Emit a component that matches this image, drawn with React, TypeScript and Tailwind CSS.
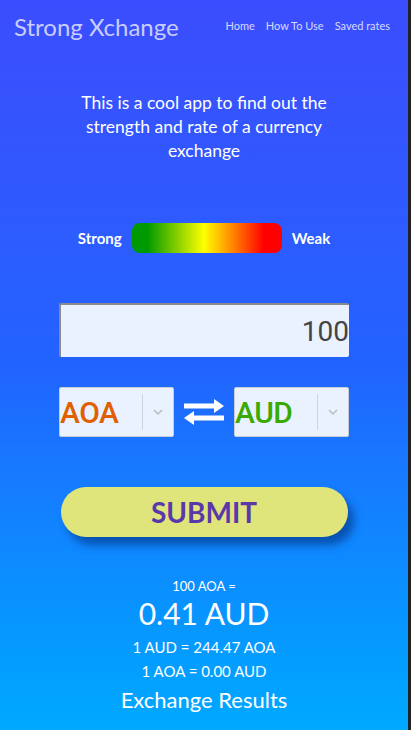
import { useState } from 'react';

export default function App() {
  const [amount, setAmount] = useState('100');
  const [from, setFrom] = useState('AOA');
  const [to, setTo] = useState('AUD');

  const navItems = ['Home', 'How To Use', 'Saved rates'];

  return (
    <div className="flex h-[730px] w-[411px] overflow-hidden bg-[#222]">
      <div
        className="flex h-full w-[408px] flex-col bg-gradient-to-b from-[#3b4dfe] via-[#2163ff] to-[#00a9ff] text-white"
        style={{ fontFamily: 'Lato, "Noto Sans", sans-serif' }}
      >
        {/* Header */}
        <header className="flex h-[53px] items-center justify-between pl-[14px] pr-[18px]">
          <a href="#" className="text-[24px] text-[#c9cdff]">Strong Xchange</a>
          <nav className="flex gap-[11px] text-[11px] text-[#d6d9ff]">
            {navItems.map((item) => (
              <a key={item} href="#">{item}</a>
            ))}
          </nav>
        </header>

        {/* Intro */}
        <p className="mx-auto mt-[38px] w-[300px] text-center text-[17.5px] leading-[24px]">
          This is a cool app to find out the strength and rate of a currency exchange
        </p>

        {/* Strength scale */}
        <div className="mt-[60px] flex items-center justify-center gap-[10px]">
          <span className="text-[15px] font-bold">Strong</span>
          <div className="h-[30px] w-[150px] rounded-[8px] bg-[linear-gradient(to_right,#009900_10%,#ffff00_48%,#ff0000_88%)]" />
          <span className="text-[15px] font-bold">Weak</span>
        </div>

        {/* Amount */}
        <input
          value={amount}
          onChange={(e) => setAmount(e.target.value)}
          className="mx-auto mt-[50px] h-[54px] w-[290px] rounded-[2px] border-l-2 border-t-2 border-[#8a8a8a] bg-[#eaf2ff] px-0 text-right text-[28px] text-[#444] outline-none"
          style={{ fontFamily: 'Roboto, sans-serif' }}
        />

        {/* Currency pickers */}
        <div className="mx-auto mt-[30px] flex w-[290px] items-center justify-between">
          <CurrencySelect value={from} onChange={setFrom} color="text-[#e06000]" />
          <svg width="40" height="30" viewBox="0 0 40 30" fill="white">
            <path d="M0 6.5h30V2l10 7-10 7v-4.5H0z" />
            <path d="M40 18.5H10V14L0 21l10 7v-4.5h30z" />
          </svg>
          <CurrencySelect value={to} onChange={setTo} color="text-[#3aaa00]" />
        </div>

        {/* Submit */}
        <button className="mx-auto mt-[50px] h-[50px] w-[287px] rounded-full bg-[#dfe57a] text-[28px] font-bold text-[#5a38aa] shadow-[6px_8px_8px_rgba(0,40,110,0.55)]">
          SUBMIT
        </button>

        {/* Results */}
        <div className="mt-[40px] flex flex-col items-center">
          <span className="text-[13px] leading-[18px]">100 AOA =</span>
          <span className="text-[30px] leading-[36px]">0.41 AUD</span>
          <span className="mt-[4px] text-[15px] leading-[24px]">1 AUD = 244.47 AOA</span>
          <span className="text-[15px] leading-[24px]">1 AOA = 0.00 AUD</span>
          <span className="mt-[1px] text-[22px] leading-[32px]">Exchange Results</span>
        </div>
      </div>
    </div>
  );
}

function CurrencySelect({
  value,
  onChange,
  color,
}: {
  value: string;
  onChange: (v: string) => void;
  color: string;
}) {
  return (
    <button
      onClick={() => onChange(value)}
      className="flex h-[50px] w-[115px] items-center rounded-[2px] border border-[#c8cdd6] bg-[#eaf2ff]"
    >
      <span
        className={`flex-1 text-left text-[30px] font-medium tracking-[-0.5px] ${color}`}
        style={{ fontFamily: 'Roboto, sans-serif' }}
      >
        {value}
      </span>
      <span className="h-[36px] w-px bg-[#cfd4dc]" />
      <svg className="mx-[9px]" width="12" height="12" viewBox="0 0 12 12" fill="none" stroke="#bbb" strokeWidth="1.5">
        <path d="M2 4l4 4 4-4" />
      </svg>
    </button>
  );
}
